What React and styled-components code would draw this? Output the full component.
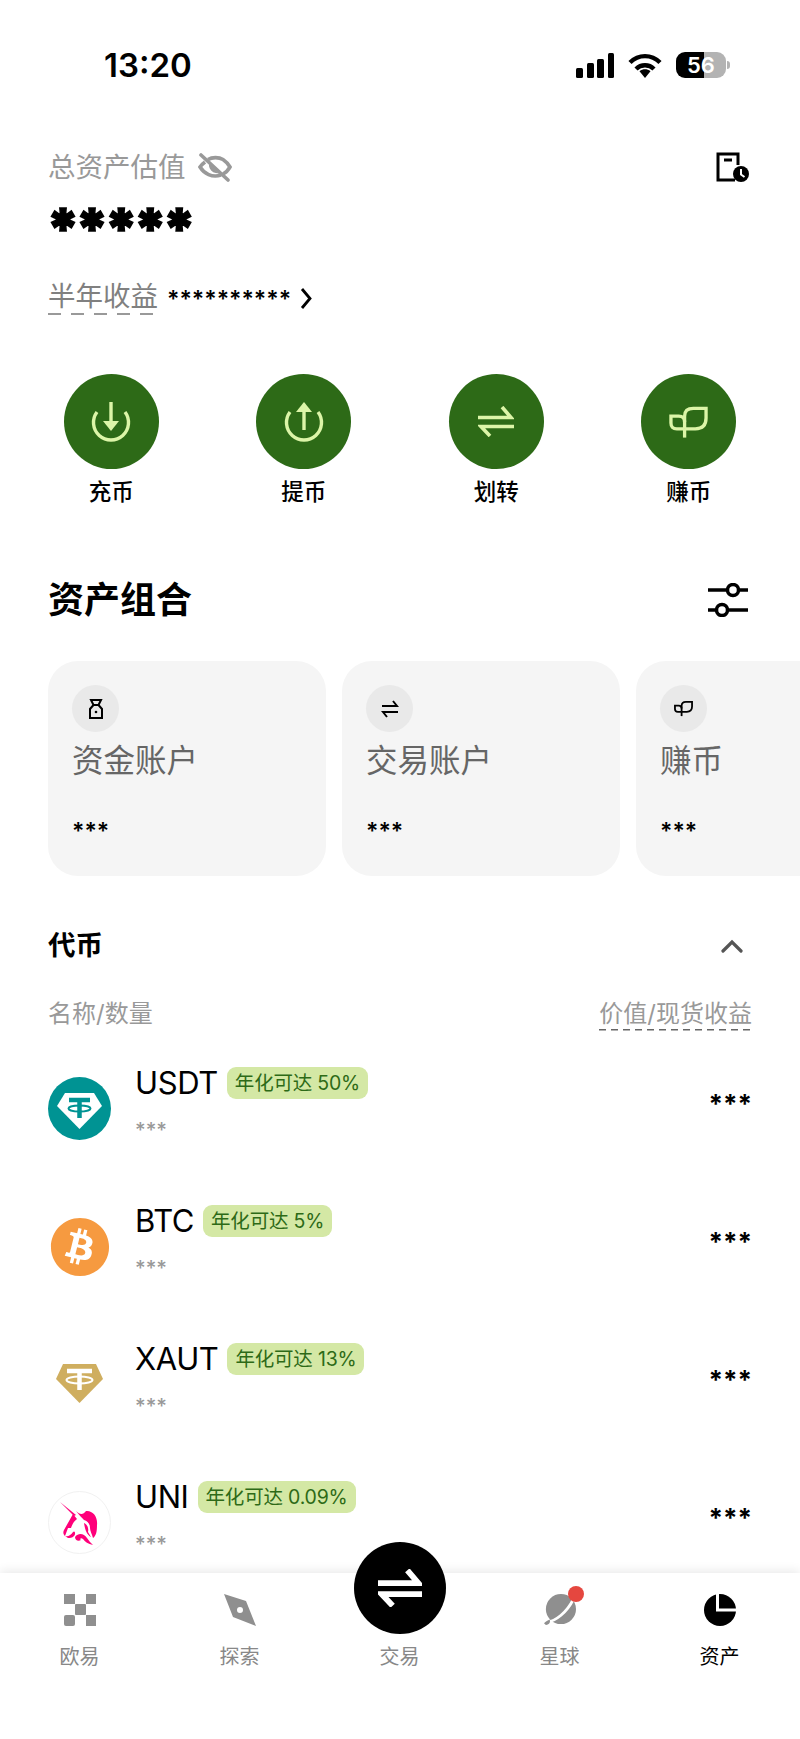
import React from "react";
import styled, { createGlobalStyle } from "styled-components";
import { FaBitcoin } from "react-icons/fa";

const Global = createGlobalStyle`
  html, body { margin: 0; padding: 0; background: #fff; }
  * { box-sizing: border-box; }
  body { font-family: Inter, "Noto Sans CJK SC", sans-serif; color: #000; }
`;

const Page = styled.div`
  position: relative;
  width: 800px;
  height: 1739px;
  overflow: hidden;
  background: #fff;
`;

const StatusBar = styled.div`
  height: 130px;
  padding: 0 74px 0 104px;
  display: flex;
  align-items: center;
  justify-content: space-between;
`;
const Time = styled.div`
  font-size: 33px;
  font-weight: 600;
  line-height: 40px;
`;
const StatusIcons = styled.div`
  display: flex;
  align-items: center;
  gap: 14px;
`;
const Battery = styled.div`
  position: relative;
  width: 50px;
  height: 26px;
  border-radius: 9px;
  background: linear-gradient(90deg, #000 56%, #b3b3b3 56%);
  color: #fff;
  font-size: 22px;
  font-weight: 600;
  line-height: 26px;
  text-align: center;
  &::after {
    content: "";
    position: absolute;
    right: -4px;
    top: 9px;
    width: 3px;
    height: 8px;
    border-radius: 0 3px 3px 0;
    background: #b3b3b3;
  }
`;

const Summary = styled.div`
  padding: 19px 51px 0 48px;
`;
const LabelRow = styled.div`
  height: 36px;
  display: flex;
  align-items: center;
  justify-content: space-between;
`;
const LabelGroup = styled.div`
  display: flex;
  align-items: center;
  gap: 12px;
  color: #999;
  font-size: 27.5px;
`;
const LabelText = styled.span`
  padding-bottom: 5px;
`;
const Amount = styled.div`
  margin-top: 14px;
  margin-left: -2px;
  height: 44px;
  font-size: 56px;
  font-weight: 900;
  line-height: 60px;
  letter-spacing: -5px;
  -webkit-text-stroke: 1.5px #000;
`;
const YieldRow = styled.div`
  margin-top: 35px;
  height: 40px;
  display: flex;
  align-items: center;
  gap: 9px;
`;
const YieldLabel = styled.span`
  font-size: 27.5px;
  line-height: 34px;
  color: #808080;
  padding-bottom: 2px;
  margin-top: -2px;
  background: repeating-linear-gradient(90deg, #999 0 13px, transparent 13px 23px) left bottom / 100% 2px no-repeat;
`;
const YieldStars = styled.span`
  font-size: 23px;
  font-weight: 600;
  line-height: 42px;
  align-self: flex-start;
`;

const Actions = styled.div`
  margin-top: 56px;
  padding: 0 15px;
  display: grid;
  grid-template-columns: repeat(4, 1fr);
`;
const Action = styled.div`
  display: flex;
  flex-direction: column;
  align-items: center;
`;
const ActionCircle = styled.div`
  width: 95px;
  height: 95px;
  border-radius: 50%;
  background: #2d6a17;
  display: flex;
  align-items: center;
  justify-content: center;
`;
const ActionLabel = styled.div`
  margin-top: 8px;
  font-size: 22.5px;
  font-weight: 500;
  line-height: 30px;
`;

const SectionHeader = styled.div`
  margin-top: 68px;
  height: 50px;
  padding: 0 52px 0 48px;
  display: flex;
  align-items: center;
  justify-content: space-between;
`;
const SectionTitle = styled.div`
  font-size: 36px;
  font-weight: 700;
  padding-bottom: 6px;
`;

const Cards = styled.div`
  margin-top: 36px;
  padding-left: 48px;
  display: flex;
  gap: 16px;
  overflow: hidden;
`;
const Card = styled.div`
  flex: none;
  width: 278px;
  height: 215px;
  border-radius: 30px;
  background: #f5f5f5;
  padding: 24px;
`;
const CardIcon = styled.div`
  width: 47px;
  height: 47px;
  border-radius: 50%;
  background: #e9e9e9;
  display: flex;
  align-items: center;
  justify-content: center;
`;
const CardTitle = styled.div`
  margin-top: 8px;
  font-size: 31.5px;
  line-height: 42px;
  color: #666;
`;
const CardValue = styled.div`
  margin-top: 37px;
  font-size: 23px;
  font-weight: 600;
  line-height: 24px;
`;

const TokenHeader = styled.div`
  margin-top: 50px;
  height: 40px;
  padding: 0 57px 0 48px;
  display: flex;
  align-items: center;
  justify-content: space-between;
`;
const TokenTitle = styled.div`
  font-size: 27.5px;
  font-weight: 700;
  padding-bottom: 6px;
`;
const ColumnHeader = styled.div`
  margin-top: 30px;
  height: 36px;
  padding: 0 48px;
  display: flex;
  align-items: center;
  justify-content: space-between;
  color: #999;
  font-size: 24px;
  line-height: 36px;
`;
const DashedLabel = styled.span`
  background: repeating-linear-gradient(90deg, #666 0 7px, transparent 7px 12px) left 0 bottom 2px / 100% 1.5px no-repeat;
`;

const List = styled.div`
  margin-top: 7px;
`;
const Row = styled.div`
  height: 138px;
  padding: 0 48px;
  display: flex;
  align-items: flex-start;
`;
const TokenIcon = styled.div`
  flex: none;
  width: 63px;
  height: 63px;
  margin-top: 38px;
  border-radius: 50%;
  display: flex;
  align-items: center;
  justify-content: center;
  border: ${(p) => (p.$outlined ? "1px solid #f1f1f1" : "none")};
`;
const TokenInfo = styled.div`
  margin-left: 24px;
  padding-top: 24px;
  flex: 1;
`;
const NameRow = styled.div`
  height: 40px;
  display: flex;
  align-items: center;
  gap: 9px;
`;
const TokenName = styled.div`
  font-size: 31px;
  line-height: 40px;
  letter-spacing: -0.4px;
`;
const Badge = styled.div`
  height: 32px;
  padding: 0 8px;
  border-radius: 9px;
  background: #d4e8a5;
  color: #2d6a17;
  font-size: 19.5px;
  line-height: 32px;
  letter-spacing: -0.2px;
`;
const SubValue = styled.div`
  margin-top: 15px;
  font-size: 20.5px;
  font-weight: 500;
  line-height: 24px;
  color: #999;
`;
const RowValue = styled.div`
  margin-top: 50px;
  font-size: 26px;
  font-weight: 700;
  line-height: 30px;
`;

const Nav = styled.div`
  position: absolute;
  left: 0;
  right: 0;
  bottom: 0;
  height: 166px;
  background: #fff;
  box-shadow: 0 -2px 10px rgba(0, 0, 0, 0.09);
  display: grid;
  grid-template-columns: repeat(5, 1fr);
`;
const NavItem = styled.div`
  position: relative;
  padding-top: 21px;
  display: flex;
  flex-direction: column;
  align-items: center;
`;
const NavLabel = styled.div`
  margin-top: 17px;
  margin-right: 1px;
  font-size: 20px;
  line-height: 28px;
  color: ${(p) => (p.$active ? "#000" : "#888")};
`;
const IconSpacer = styled.div`
  height: 32px;
`;
const TradeButton = styled.div`
  position: absolute;
  left: 50%;
  top: -31px;
  width: 92px;
  height: 92px;
  margin-left: -46px;
  border-radius: 50%;
  background: #000;
  display: flex;
  align-items: center;
  justify-content: center;
`;
const RedDot = styled.div`
  position: absolute;
  left: 50%;
  top: 13px;
  width: 16px;
  height: 16px;
  margin-left: 8px;
  border-radius: 50%;
  background: #e5473f;
`;

const Signal = () => (
  <svg width="38" height="25" viewBox="0 0 38 25" fill="#000">
    <rect x="0" y="15" width="7" height="10" rx="1.5" />
    <rect x="11" y="10" width="7" height="15" rx="1.5" />
    <rect x="21" y="6" width="7" height="19" rx="1.5" />
    <rect x="32" y="0" width="6" height="25" rx="1.5" />
  </svg>
);
const Wifi = () => (
  <svg width="34" height="25" viewBox="0 0 34 25" fill="none" stroke="#000" strokeWidth="4.4">
    <path d="M2 9.5C10.5 1 23.5 1 32 9.5" />
    <path d="M8 16C13 11 21 11 26 16" />
    <path d="M11.5 18.2C15 15.6 19 15.6 22.5 18.2L17 25Z" fill="#000" stroke="none" />
  </svg>
);
const EyeOff = () => (
  <svg width="34" height="30" viewBox="0 0 34 30" fill="none" stroke="#999" strokeWidth="3.6">
    <path d="M3 3L30 28" strokeLinecap="round" />
    <path d="M10 7.5C14 5 21 5 25 7.5C28 9.5 30.5 12.5 32 15C30 18.5 27 21 25 22" />
    <path d="M7 10C5 11.5 3 13.5 2 15C6 21.5 14 26 23 23" />
    <path d="M12 13C12 17 15 19.5 18 20L12 14Z" fill="#999" strokeWidth="2" />
  </svg>
);
const Ledger = () => (
  <svg width="33" height="31" viewBox="0 0 33 31" fill="none">
    <path d="M19 28H2V2H22V13" stroke="#000" strokeWidth="3" />
    <path d="M8 8H16" stroke="#000" strokeWidth="3" />
    <circle cx="25" cy="22" r="8" fill="#000" />
    <path d="M25 17V22.5L28.5 25" stroke="#fff" strokeWidth="2" />
  </svg>
);
const Chevron = () => (
  <svg width="12" height="23" viewBox="0 0 12 23" fill="none" stroke="#000" strokeWidth="2.8">
    <path d="M2 2L10 11.5L2 21" />
  </svg>
);

const DepositIcon = () => (
  <svg width="40" height="40" viewBox="0 0 40 40" fill="none" stroke="#dcf5a8" strokeWidth="3.4">
    <path d="M6 10A17.5 17.5 0 1 0 34 10" />
    <path d="M20 0V24" />
    <path d="M12 19H28L20 29Z" fill="#dcf5a8" stroke="none" />
  </svg>
);
const WithdrawIcon = () => (
  <svg width="40" height="40" viewBox="0 0 40 40" fill="none" stroke="#dcf5a8" strokeWidth="3.4">
    <path d="M6 10A17.5 17.5 0 1 0 34 10" />
    <path d="M20 6V28" />
    <path d="M12 10H28L20 0Z" fill="#dcf5a8" stroke="none" />
  </svg>
);
const Swap = ({ size = 36, h = 31, color = "#dcf5a8", sw = 3.6 }) => (
  <svg width={size} height={h} viewBox="0 0 36 31" fill="none" stroke={color} strokeWidth={sw}>
    <path d="M0 11.5H33L24 1" />
    <path d="M36 20.5H3L12 30" />
  </svg>
);
const CardSwap = () => (
  <svg width="18" height="18" viewBox="0 0 18 18" fill="none" stroke="#000" strokeWidth="2">
    <path d="M1 6H16L12 1" />
    <path d="M17 12H2L6 17" />
  </svg>
);
const Leaf = ({ w = 39, h = 32, color = "#dcf5a8", sw = 3.4 }) => (
  <svg width={w} height={h} viewBox="0 0 40 32" fill="none" stroke={color} strokeWidth={sw}>
    <path d="M16 23V10Q16 2 25 2H38V12Q38 23 27 23H16" />
    <path d="M16 23H8Q2 23 2 17V10H10Q16 10 16 16" />
    <path d="M16 23V32" />
  </svg>
);
const Sliders = () => (
  <svg width="40" height="34" viewBox="0 0 40 34" fill="none" stroke="#000" strokeWidth="3.5">
    <path d="M0 7H19M31 7H40" />
    <circle cx="25" cy="7" r="5.5" />
    <path d="M0 27H8M20 27H40" />
    <circle cx="14" cy="27" r="5.5" />
  </svg>
);
const Bag = () => (
  <svg width="16" height="20" viewBox="0 0 16 20" fill="none" stroke="#000" strokeWidth="2">
    <path d="M3 1H13L10.5 6H5.5Z" />
    <path d="M5.5 6L2 10V19H14V10L10.5 6" />
    <circle cx="8" cy="13" r="1.3" fill="#000" stroke="none" />
  </svg>
);
const ChevronUp = () => (
  <svg width="22" height="14" viewBox="0 0 22 14" fill="none" stroke="#555" strokeWidth="3.2" strokeLinecap="round">
    <path d="M2 12L11 3L20 12" />
  </svg>
);

const Tether = () => (
  <svg width="63" height="63" viewBox="0 0 63 63">
    <circle cx="31.5" cy="31.5" r="31.5" fill="#009393" />
    <path d="M17 16H46L54 29L31.5 52L9 29Z" fill="#fff" />
    <path d="M21 23H42M31.5 23V41" stroke="#009393" strokeWidth="4.5" fill="none" />
    <ellipse cx="31.5" cy="31.5" rx="11" ry="3" stroke="#009393" strokeWidth="2" fill="none" />
  </svg>
);
const Xaut = () => (
  <svg width="63" height="63" viewBox="0 0 63 63">
    <path d="M15 11H48L55 26L31.5 50L8 26Z" fill="#cfae5f" />
    <path d="M19 18H44M31.5 18V37" stroke="#fff" strokeWidth="4.5" fill="none" />
    <ellipse cx="31.5" cy="27" rx="13" ry="3.5" stroke="#fff" strokeWidth="2" fill="none" />
  </svg>
);
const Unicorn = () => (
  <svg width="40" height="44" viewBox="0 0 40 44" fill="#ff007a">
    <path d="M0 1L16 14L14 15Z" />
    <path d="M16 10C20 14 23 14 26 10C32 9 38 15 37 24C37 31 36 35 33 37C32 33 30 30 30 27C30 22 27 20 24 19C22 17 19 14 16 10Z" />
    <path d="M13 13L17 18C14 20 12 24 11 27L8 27L5 35C3 33 3 31 4 29Z" />
    <path d="M5 35C8 36 11 34 13 31C15 29 16 33 14 35C12 37 10 37 8 37Z" />
    <path d="M15 36C19 31 24 33 27 37C29 40 31 42 33 44C28 43 25 41 23 38C21 36 19 38 21 39C18 41 15 39 15 36Z" />
    <path d="M24 22C27 23 29 27 28 31L31 36C27 34 25 29 24 22Z" />
  </svg>
);

const OkxIcon = () => (
  <svg width="32" height="32" viewBox="0 0 32 32" fill="#8f8f8f">
    <rect x="0" y="0" width="11" height="10" />
    <rect x="22" y="0" width="10" height="10" />
    <rect x="11" y="10" width="11" height="11" rx="1" />
    <rect x="0" y="21" width="11" height="11" rx="2" />
    <rect x="22" y="21" width="10" height="11" />
  </svg>
);
const Compass = () => (
  <svg width="32" height="32" viewBox="0 0 32 32">
    <path fillRule="evenodd" fill="#8f8f8f" d="M0 0L22 7L32 32L9 23ZM16 13A3 3 0 1 0 16 19A3 3 0 1 0 16 13Z" />
  </svg>
);
const Planet = () => (
  <svg width="34" height="32" viewBox="0 0 34 34" overflow="visible">
    <circle cx="18" cy="16" r="16" fill="#8f8f8f" />
    <path d="M3 30C12 29 24 20 31 6" stroke="#fff" strokeWidth="3" fill="none" />
    <path d="M0 31C2 29 4 28 6 27C7 30 6 32 2 33Z" fill="#8f8f8f" />
  </svg>
);
const Pie = () => (
  <svg width="32" height="32" viewBox="0 0 32 32" fill="none">
    <circle cx="16" cy="16" r="16" fill="#000" />
    <path d="M13.5 0V16H32" stroke="#fff" strokeWidth="3" />
  </svg>
);

const rows = [
  { name: "USDT", badge: "年化可达 50%", icon: <Tether /> },
  { name: "BTC", badge: "年化可达 5%", icon: <FaBitcoin size={60} color="#f69a40" /> },
  { name: "XAUT", badge: "年化可达 13%", icon: <Xaut /> },
  { name: "UNI", badge: "年化可达 0.09%", icon: <Unicorn />, outlined: true },
];

const actions = [
  { label: "充币", icon: <DepositIcon /> },
  { label: "提币", icon: <WithdrawIcon /> },
  { label: "划转", icon: <Swap /> },
  { label: "赚币", icon: <Leaf /> },
];

const cards = [
  { title: "资金账户", icon: <Bag /> },
  { title: "交易账户", icon: <CardSwap /> },
  { title: "赚币", icon: <Leaf w={19} h={17} color="#000" sw={3.8} /> },
];

export default function App() {
  return (
    <Page>
      <Global />
      <StatusBar>
        <Time>13:20</Time>
        <StatusIcons>
          <Signal />
          <Wifi />
          <Battery>56</Battery>
        </StatusIcons>
      </StatusBar>

      <Summary>
        <LabelRow>
          <LabelGroup>
            <LabelText>总资产估值</LabelText>
            <EyeOff />
          </LabelGroup>
          <Ledger />
        </LabelRow>
        <Amount>*****</Amount>
        <YieldRow>
          <YieldLabel>半年收益</YieldLabel>
          <YieldStars>**********</YieldStars>
          <Chevron />
        </YieldRow>
      </Summary>

      <Actions>
        {actions.map((a) => (
          <Action key={a.label}>
            <ActionCircle>{a.icon}</ActionCircle>
            <ActionLabel>{a.label}</ActionLabel>
          </Action>
        ))}
      </Actions>

      <SectionHeader>
        <SectionTitle>资产组合</SectionTitle>
        <Sliders />
      </SectionHeader>

      <Cards>
        {cards.map((c) => (
          <Card key={c.title}>
            <CardIcon>{c.icon}</CardIcon>
            <CardTitle>{c.title}</CardTitle>
            <CardValue>***</CardValue>
          </Card>
        ))}
      </Cards>

      <TokenHeader>
        <TokenTitle>代币</TokenTitle>
        <ChevronUp />
      </TokenHeader>
      <ColumnHeader>
        <span>名称/数量</span>
        <DashedLabel>价值/现货收益</DashedLabel>
      </ColumnHeader>

      <List>
        {rows.map((r) => (
          <Row key={r.name}>
            <TokenIcon $outlined={r.outlined}>{r.icon}</TokenIcon>
            <TokenInfo>
              <NameRow>
                <TokenName>{r.name}</TokenName>
                <Badge>{r.badge}</Badge>
              </NameRow>
              <SubValue>***</SubValue>
            </TokenInfo>
            <RowValue>***</RowValue>
          </Row>
        ))}
      </List>

      <Nav>
        <NavItem>
          <OkxIcon />
          <NavLabel>欧易</NavLabel>
        </NavItem>
        <NavItem>
          <Compass />
          <NavLabel>探索</NavLabel>
        </NavItem>
        <NavItem>
          <TradeButton>
            <Swap size={44} h={38} color="#fff" sw={4.8} />
          </TradeButton>
          <IconSpacer />
          <NavLabel>交易</NavLabel>
        </NavItem>
        <NavItem>
          <Planet />
          <RedDot />
          <NavLabel>星球</NavLabel>
        </NavItem>
        <NavItem>
          <Pie />
          <NavLabel $active>资产</NavLabel>
        </NavItem>
      </Nav>
    </Page>
  );
}
